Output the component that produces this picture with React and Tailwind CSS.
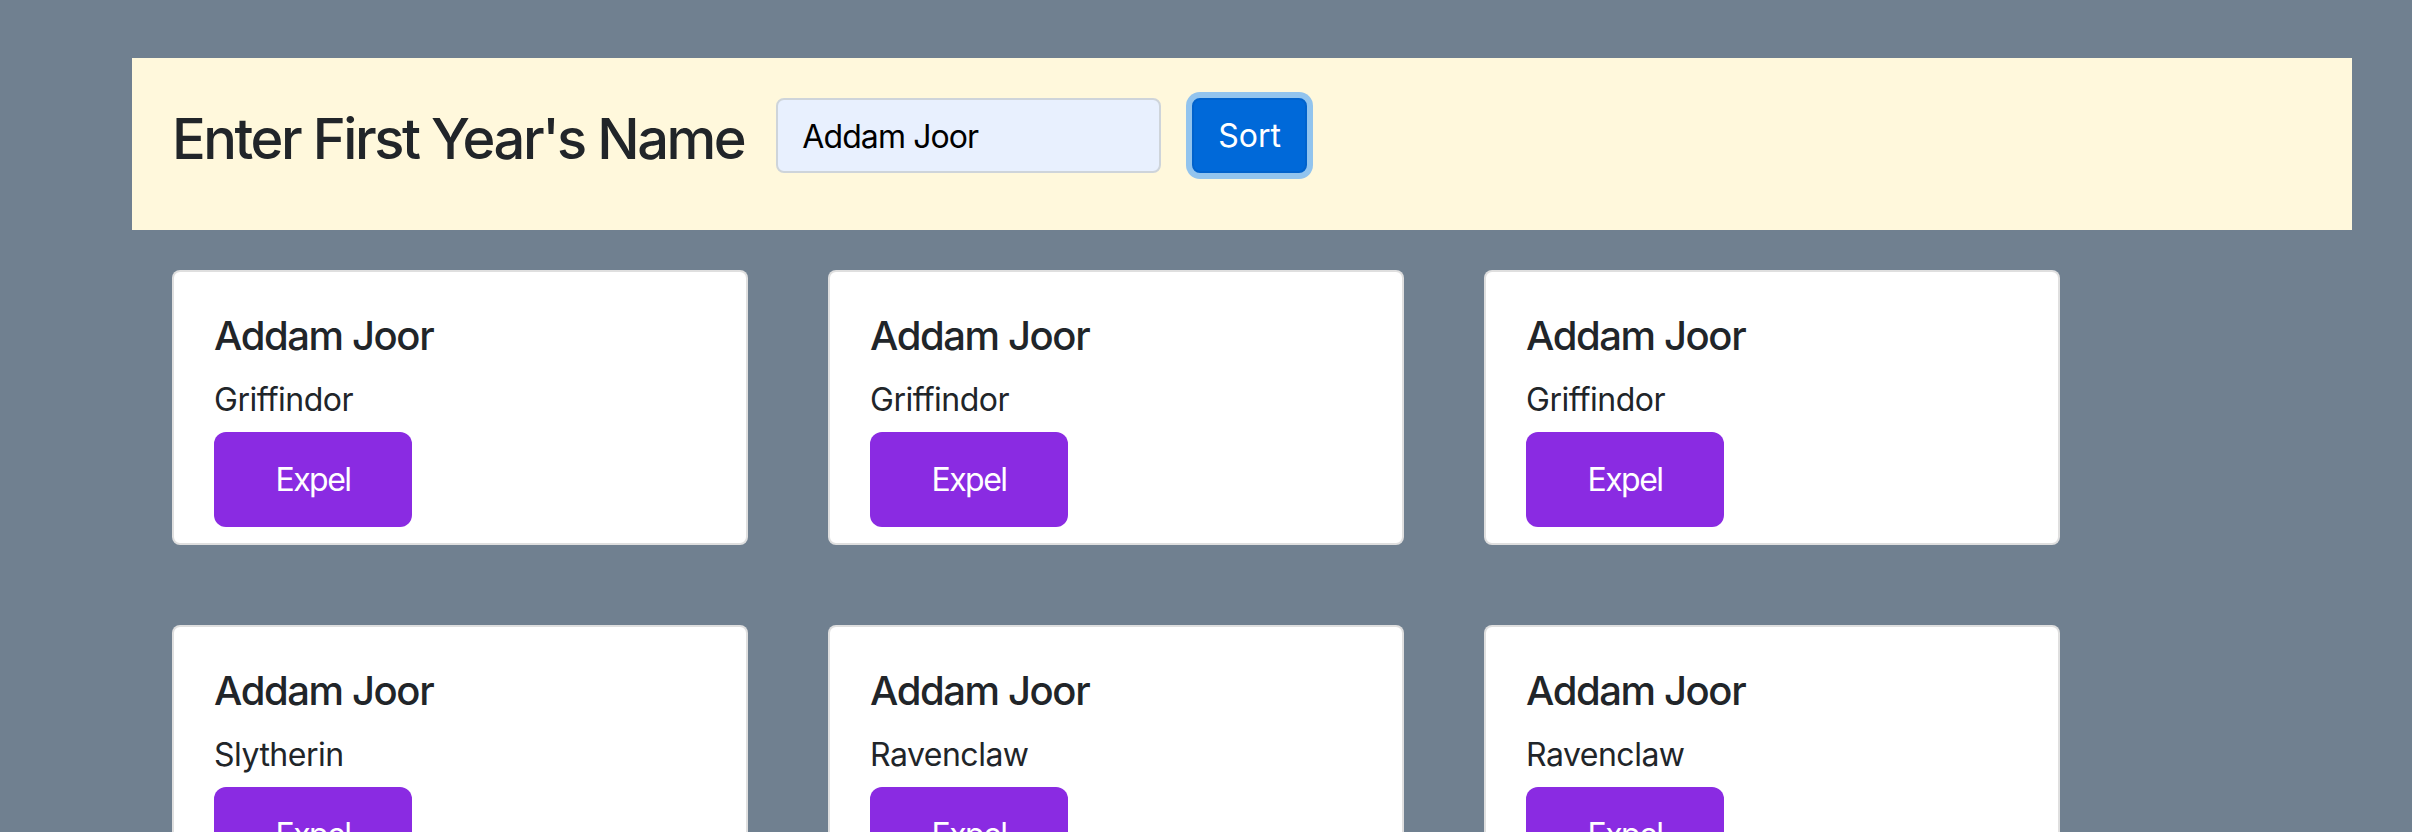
import React from 'react';

const students = [
  { name: 'Addam Joor', house: 'Griffindor' },
  { name: 'Addam Joor', house: 'Griffindor' },
  { name: 'Addam Joor', house: 'Griffindor' },
  { name: 'Addam Joor', house: 'Slytherin' },
  { name: 'Addam Joor', house: 'Ravenclaw' },
  { name: 'Addam Joor', house: 'Ravenclaw' },
];

const StudentCard = ({ student }) => (
  <div className="m-[40px] w-[576px] bg-white border-2 border-[rgba(0,0,0,0.125)] rounded-[8px] px-[40px] pt-[40px] pb-[16px]">
    <h5 className="text-[40px] leading-[1.2] font-medium text-[#212529] mb-[16px] tracking-[-1.4px]">{student.name}</h5>
    <p className="text-[32px] leading-[1.5] text-[#212529] mb-[8px] tracking-[-0.5px]">{student.house}</p>
    <button className="w-[198px] h-[95px] bg-[#8a2be2] text-white text-[32px] rounded-[12px] tracking-[-1.5px]">
      Expel
    </button>
  </div>
);

export default function App() {
  return (
    <div
      className="min-h-screen bg-[#708090] pt-[58px] pl-[132px] pr-[60px]"
      style={{ fontFamily: 'Inter, "Noto Sans", "Liberation Sans", sans-serif' }}
    >
      <div className="bg-[#fff8dc] pl-[40px] pt-[40px] pb-[57px] flex items-center">
        <h3 className="text-[56px] leading-[1.2] font-medium text-[#212529] mt-[8px] mr-[32px] tracking-[-2.45px]">
          Enter First Year's Name
        </h3>
        <input
          className="w-[385px] h-[75px] border-2 border-[#ced4da] rounded-[8px] bg-[#e8f0fe] px-[24px] pt-[2px] text-[32px] text-black outline-none tracking-[-0.9px]"
          defaultValue="Addam Joor"
        />
        <button className="ml-[31px] h-[75px] px-[24px] bg-[#0069d9] border-2 border-[#0062cc] rounded-[8px] text-white text-[32px] shadow-[0_0_0_6px_rgba(38,143,255,0.5)]">
          Sort
        </button>
      </div>

      <div className="flex flex-wrap">
        {students.map((s, i) => (
          <StudentCard key={i} student={s} />
        ))}
      </div>
    </div>
  );
}
